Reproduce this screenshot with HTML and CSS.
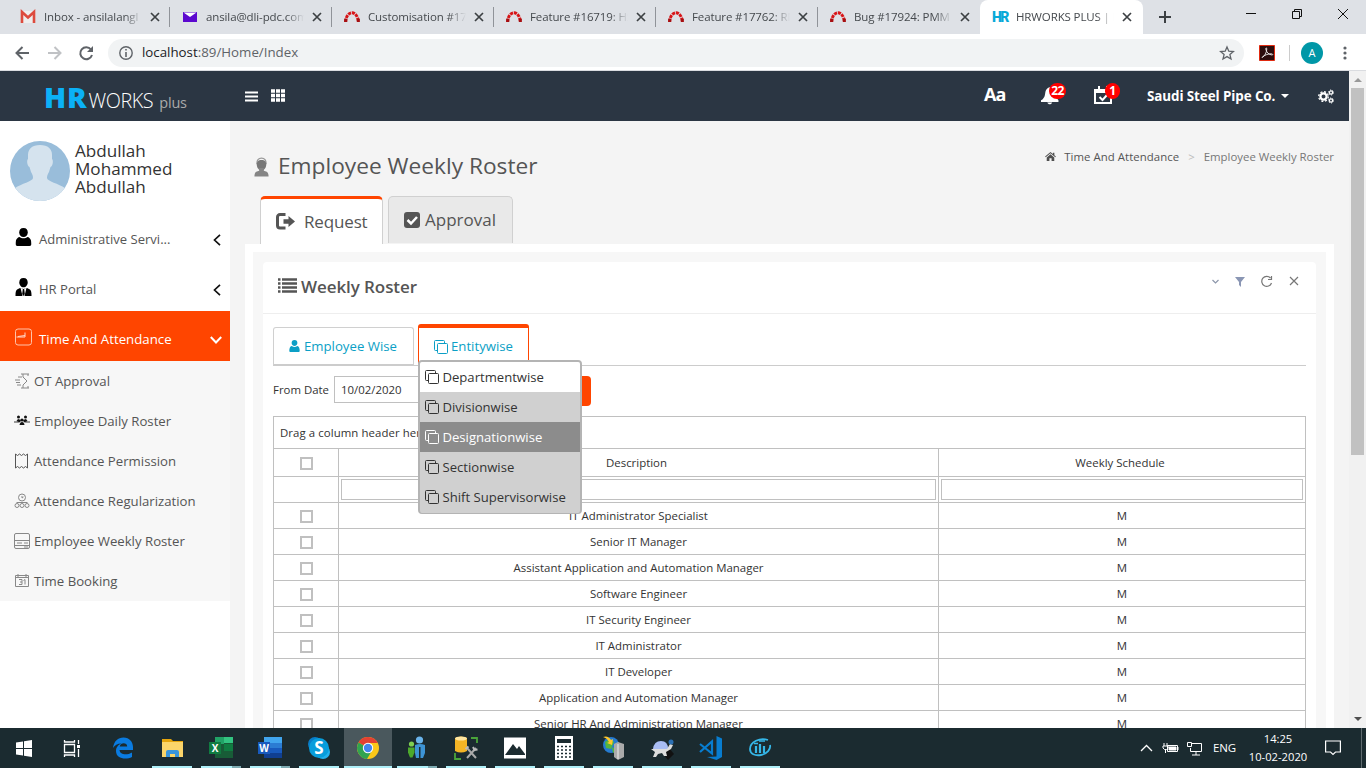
FILE: index.html
```html
<!DOCTYPE html>
<html lang="en">
<head>
<meta charset="utf-8">
<title>HRWORKS PLUS</title>
<link rel="stylesheet" href="styles.css">
</head>
<body>
<svg class="defs" width="0" height="0">
  <symbol id="x" viewBox="0 0 10 10"><path d="M1 1l8 8M9 1l-8 8" fill="none" stroke="currentColor" stroke-width="1.7"/></symbol>
  <symbol id="redmine" viewBox="0 0 16 12"><g fill="none" stroke-width="3"><path d="M1.6 11C2 5 5 1.8 8 1.8S14 5 14.4 11" stroke="#d81518" stroke-dasharray="3.2 .8"/><path d="M1.7 11v-3.3M14.3 11V7.7" stroke="#a50f12"/></g></symbol>
  <symbol id="clone" viewBox="0 0 14 14"><path d="M4 10.5H1.5a1 1 0 0 1-1-1v-8a1 1 0 0 1 1-1h8a1 1 0 0 1 1 1V3.500M4.500 3.500h8a1 1 0 0 1 1 1v8a1 1 0 0 1-1 1h-8a1 1 0 0 1-1-1v-8a1 1 0 0 1 1-1z" fill="none" stroke="currentColor"/></symbol>
  <symbol id="user" viewBox="0 0 16 18"><path d="M8 0c3 0 4.300 2 4.300 4.500S10.500 9 8 9 3.700 7 3.700 4.500 5 0 8 0z" fill="currentColor"/><path d="M4 9c2 1.800 6 1.800 8 0 3 .5 4 4 4 7 0 1.300-.8 2-2 2H2c-1.200 0-2-.7-2-2 0-3 1-6.500 4-7z" fill="currentColor"/></symbol>
</svg>
<div class="screen">
  <div class="tabstrip">
    <div class="tab"><svg class="fav" viewBox="0 0 16 14"><path d="M1 1h14v12H1z" fill="#eee"/><path d="M2 13V2l6 5.500L14 2v11" fill="none" stroke="#dd4b3e" stroke-width="2.600"/></svg><span class="tab-title">Inbox - ansilalangl</span><svg class="tab-x"><use href="#x"/></svg></div>
    <div class="tab"><svg class="fav" viewBox="0 0 16 14"><path d="M1 2h14v10H1z" fill="#5c08cf"/><path d="M1.500 2.500h13L8 7z" fill="#fff"/></svg><span class="tab-title">ansila@dli-pdc.com</span><svg class="tab-x"><use href="#x"/></svg></div>
    <div class="tab"><svg class="fav"><use href="#redmine"/></svg><span class="tab-title">Customisation #17</span><svg class="tab-x"><use href="#x"/></svg></div>
    <div class="tab"><svg class="fav"><use href="#redmine"/></svg><span class="tab-title">Feature #16719: HS</span><svg class="tab-x"><use href="#x"/></svg></div>
    <div class="tab"><svg class="fav"><use href="#redmine"/></svg><span class="tab-title">Feature #17762: RN</span><svg class="tab-x"><use href="#x"/></svg></div>
    <div class="tab last"><svg class="fav"><use href="#redmine"/></svg><span class="tab-title">Bug #17924: PMM</span><svg class="tab-x"><use href="#x"/></svg></div>
    <div class="tab active"><span class="hr-fav">HR</span><span class="tab-title">HRWORKS PLUS | E</span><svg class="tab-x"><use href="#x"/></svg></div>
    <svg class="plus" viewBox="0 0 12 12"><path d="M6 0v12M0 6h12" stroke="#3c4043" stroke-width="2"/></svg>
    <svg class="winctl" viewBox="0 0 104 14" fill="none" stroke="#111"><path d="M0 7.500h10M46.500 5.500h7v7h-7zM48.500 5.500v-2h7v7h-2M92 3l10 10M102 3L92 13"/></svg>
  </div>
  <div class="toolbar">
    <svg class="nav" viewBox="0 0 80 16" fill="none" stroke-width="2"><path d="M14 8H2M7.500 2L1.500 8l6 6" stroke="#5f6368"/><path d="M33 8h12M39.500 2l6 6-6 6" stroke="#c0c2c5"/><path d="M76 4.500A6 6 0 1 0 77 10" stroke="#5f6368"/><path d="M78 1v6h-6z" fill="#5f6368"/></svg>
    <div class="omni"><svg class="info" viewBox="0 0 14 14"><circle cx="7" cy="7" r="6.200" fill="none" stroke="#5f6368" stroke-width="1.400"/><path d="M7 3v1.600M7 6v5" stroke="#5f6368" stroke-width="1.600"/></svg><span class="url"><b>localhost</b>:89/Home/Index</span><svg class="star" viewBox="0 0 14 14"><path d="M7 1l1.800 4.200 4.600.4-3.500 3 1.100 4.400L7 10.600 3 13l1.100-4.400-3.500-3 4.600-.4z" fill="none" stroke="#5f6368" stroke-width="1.300"/></svg></div>
    <svg class="pdf" viewBox="0 0 16 16"><path d="M.5.500h15v15H.5z" fill="#2b0d0d" stroke="#e02a10"/><path d="M3 12.500c3-1.500 4.500-5 4.800-8.500.1-1.500-1.300-1.300-1 0C7.300 7 9.500 9.700 13 10c1.300 0 .6-1.400-.8-1.200-3 0-6 1-8.500 3z" fill="none" stroke="#eee" stroke-width=".9"/></svg>
    <span class="tb-sep"></span><span class="avatar-a">A</span>
    <svg class="dots" viewBox="0 0 4 14" fill="#5f6368"><circle cx="2" cy="2" r="1.600"/><circle cx="2" cy="7" r="1.600"/><circle cx="2" cy="12" r="1.600"/></svg>
  </div>
  <div class="viewport">
    <div class="page">
      <header class="topbar">
        <div class="brand"><strong>HR</strong><span>WORKS</span><small>plus</small></div>
        <svg class="burger" viewBox="0 0 13 11"><path d="M0 1.500h13M0 5.500h13M0 9.500h13" stroke="#fff" stroke-width="1.800"/></svg>
        <svg class="grid9" viewBox="0 0 14 13"><path d="M0 2h14M0 6.500h14M0 11h14" stroke="#fff" stroke-width="3.600" stroke-dasharray="4 1"/></svg>
        <span class="aa">Aa</span>
        <span class="notif bell"><svg viewBox="0 0 17 17"><path d="M0 13.500c3-2 3.500-3.500 4-7C4.500 3 7 1 9.500 1s5 2 5 5.500c0 3.500.5 5 2 7v1.500H0z" fill="#fff"/><path d="M6 15.500c.5 2.200 4 2.200 4.500 0z" fill="#fff"/></svg><i class="badge b22">22</i></span>
        <span class="notif cal"><svg viewBox="0 0 18 18"><path d="M1 4h16v13H1z" fill="none" stroke="#fff" stroke-width="2"/><path d="M1 3h16v4H1zM4 0h2v4H4zM12 0h2v4h-2z" fill="#fff"/><path d="M5.500 11l3 3 4.500-5" fill="none" stroke="#fff" stroke-width="2"/></svg><i class="badge b1">1</i></span>
        <span class="company">Saudi Steel Pipe Co.</span><i class="caret"></i>
        <svg class="gears" viewBox="0 0 16 15" fill="none" stroke="#fff"><circle cx="5.500" cy="7.500" r="3.100" stroke-width="2.200"/><circle cx="5.500" cy="7.500" r="4.800" stroke-width="1.300" stroke-dasharray="2 1.770"/><circle cx="13" cy="3.500" r="1.600" stroke-width="1.300"/><circle cx="13" cy="11.500" r="1.600" stroke-width="1.300"/><circle cx="13" cy="3.500" r="2.500" stroke-dasharray="1.200 1.410"/><circle cx="13" cy="11.500" r="2.500" stroke-dasharray="1.200 1.410"/></svg>
      </header>
      <div class="body">
        <aside class="side">
          <div class="profile">
            <svg class="photo" viewBox="0 0 60 60"><defs><clipPath id="c"><circle cx="30" cy="30" r="30"/></clipPath></defs><g clip-path="url(#c)"><path d="M0 0h60v60H0z" fill="#99bdda"/><path d="M30 4c8 0 12 4 12 10v4c1.500 1 1 7-1.500 8l-1.500 5c-1 2-2 3-2 6 0 3 12 6 18 10l5 4v9H0v-9l5-4c6-4 18-7 18-10 0-3-1-4-2-6l-1.500-5c-2.500-1-3-7-1.500-8v-4c0-6 4-10 12-10z" fill="#d5e3ee"/></g></svg>
            <div class="name">Abdullah<br>Mohammed<br>Abdullah</div>
          </div>
          <div class="item"><svg class="mi" viewBox="0 0 16 18"><use href="#user"/></svg><span class="t1">Administrative Servi...</span><svg class="chev" viewBox="0 0 8 12"><path d="M7 .8L1.500 6 7 11.200"/></svg></div>
          <div class="item"><svg class="mi" viewBox="0 0 16 18"><path d="M8 0c3 0 4.200 2 4.200 4.500S10.500 9.300 8 9.300 3.800 7 3.800 4.500 5 0 8 0z"/><path d="M4.500 10L2 11.200C.5 12 0 14 0 17v1h16v-1c0-3-.5-5-2-5.800L11.500 10 8 11z"/><path d="M5 9.800L7 18h2l2-8.200-3 1.400z" fill="#fff"/><path d="M7.300 11h1.400l.6 5L8 18l-1.300-2z"/></svg><span>HR Portal</span><svg class="chev" viewBox="0 0 8 12"><path d="M7 .8L1.500 6 7 11.200"/></svg></div>
          <div class="item on"><svg class="mi" viewBox="0 0 17 17"><rect x=".5" y=".5" width="16" height="16" rx="2.500" fill="none" stroke="#ffc3aa"/><path d="M1.500 8.500h8.500V4M3 8l7-1" fill="none" stroke="#ffd8c8"/></svg><span class="t3">Time And Attendance</span><svg class="chev down" viewBox="0 0 12 8"><path d="M.8 1L6 6.500 11.200 1"/></svg></div>
          <nav class="sub">
            <a><svg viewBox="0 0 16 16" fill="none" stroke="#888"><path d="M7 1h8M7 15h8M9 1v3l4 4-4 4v3M14 1v2M14 13v2M4 4h4M1 7h5M2 9.500h4M3 12h4"/></svg><span>OT Approval</span></a>
            <a><svg viewBox="0 0 16 16"><path d="M0 9h5M11 9h5" stroke="#999" stroke-width="2"/><g fill="#111"><circle cx="4.500" cy="4" r="1.500"/><circle cx="11.500" cy="4" r="1.500"/><path d="M2.500 8l1.500-2 3 1-1 2.500zM13.500 8L12 6 9 7l1 2.500z"/><circle cx="8" cy="7" r="1.600"/><path d="M5.500 12q.5-3 2.500-3t2.500 3z"/></g></svg><span class="t5">Employee Daily Roster</span></a>
            <a><svg viewBox="0 0 16 16" fill="none" stroke="#555"><path d="M1.500 14V1l2 1.500 2-1.500 2 1.500 2-1.500 2 1.500 2-1.500v14l-2-1.500-2 1.500-2-1.500-2 1.500-2-1.500-2 1.500z"/></svg><span>Attendance Permission</span></a>
            <a><svg viewBox="0 0 16 16" fill="none" stroke="#888"><circle cx="8" cy="4.500" r="3.500"/><path d="M8 3v2l1.500-1M2.500 9.500h11"/><circle cx="3" cy="12.500" r="2"/><circle cx="8" cy="12.500" r="2"/><circle cx="13" cy="12.500" r="2"/></svg><span>Attendance Regularization</span></a>
            <a><svg viewBox="0 0 16 16" fill="none" stroke="#888"><rect x=".5" y=".5" width="15" height="15" rx="1.500"/><path d="M1 7.500h14M1 12.500h14M3 10h5M10 10h4M10 14h4"/></svg><span>Employee Weekly Roster</span></a>
            <a><svg viewBox="0 0 16 16" fill="none" stroke="#888"><path d="M1.500 2.500h13v11h-13zM1.500 4.500h13M4 1v3M12 1v3M5 6.500h3v5H5M6 9h2M9.500 7.500l1.500-1v5"/></svg><span>Time Booking</span></a>
          </nav>
        </aside>
        <main>
          <div class="head">
            <svg class="worker" viewBox="0 0 16 22"><path d="M3 8C3 3 5 1.500 8 1.500S13 3 13 8" fill="none" stroke="#999" stroke-width="1.500"/><path d="M8 3.500c3.600 0 5 2 5 5s-1.800 6-5 6-5-3-5-6 1.400-5 5-5z" fill="#777"/><path d="M5.500 12h5v3c2 1 4.500.5 5 5V21H.5v-1C1 15.500 3.500 16 5.500 15z" fill="#858585"/></svg>
            <h1>Employee Weekly Roster</h1>
            <div class="crumbs"><svg viewBox="0 0 12 10" fill="#4f4f4f"><path d="M6 0L0 5l.7.800L6 1.500l5.300 4.300.7-.8-1.700-1.400V.800H8.700v1.300z"/><path d="M6 2.500L1.800 6v4h3V7h2.400v3h3V6z"/></svg><span class="c1">Time And Attendance</span><em>&gt;</em><span class="c2">Employee Weekly Roster</span></div>
          </div>
          <div class="maintabs">
            <div class="mt on"><svg viewBox="0 0 20 17"><path d="M9.500 1.500H4a2.500 2.500 0 0 0-2.500 2.500v8.500A2.500 2.500 0 0 0 4 15h5.500" fill="none" stroke="#555" stroke-width="3"/><path d="M7.500 6.200h5V3L19 8.500 12.500 14v-3.200h-5z" fill="#555"/></svg><span>Request</span></div>
            <div class="mt"><svg viewBox="0 0 16 16"><rect width="16" height="16" rx="3" fill="#555"/><path d="M3.500 8l3.500 3.500 6-6.500" fill="none" stroke="#fff" stroke-width="2.500"/></svg><span>Approval</span></div>
          </div>
          <div class="frame"><section class="panel">
            <div class="ptitle"><svg class="list" viewBox="0 0 19 15"><path d="M0 1.500h2.500M0 5.500h2.500M0 9.500h2.500M0 13.500h2.500M4 1.500h15M4 5.500h15M4 9.500h15M4 13.500h15" stroke="#555" stroke-width="2.500"/></svg><h2>Weekly Roster</h2>
              <svg class="tools" viewBox="0 0 90 14" fill="none"><path d="M2.500 6l3 3 3-3" stroke="#8d97ab" stroke-width="1.200"/><path d="M25 3h10l-4 5v5l-2-2V8z" fill="#8a96b4"/><path d="M60.500 4A5 5 0 1 0 61.500 9M61.500 2v3.500H58" stroke="#777" stroke-width="1.200"/><path d="M80 3l8 8M88 3l-8 8" stroke="#777" stroke-width="1.200"/></svg></div>
            <div class="pbody">
              <div class="subtabs">
                <div class="st"><svg width="11" height="12" viewBox="0 0 16 18"><use href="#user"/></svg><span>Employee Wise</span></div>
                <div class="st on"><svg width="14" height="14"><use href="#clone"/></svg><span>Entitywise</span>
                  <ul class="menu">
                    <li class="first"><svg><use href="#clone"/></svg><span>Departmentwise</span></li>
                    <li><svg><use href="#clone"/></svg><span>Divisionwise</span></li>
                    <li class="hover"><svg><use href="#clone"/></svg><span>Designationwise</span></li>
                    <li><svg><use href="#clone"/></svg><span>Sectionwise</span></li>
                    <li><svg><use href="#clone"/></svg><span>Shift Supervisorwise</span></li>
                  </ul></div>
              </div>
              <div class="filter"><label>From Date</label><div class="date">10/02/2020</div><button class="go"></button></div>
              <div class="group">Drag a column header here</div>
              <table>
                <colgroup><col class="k1"><col class="k2"><col class="k3"></colgroup>
                <tr class="th"><td><i class="cb"></i></td><td><span>Description</span></td><td><span>Weekly Schedule</span></td></tr>
                <tr class="tf"><td></td><td><div class="box"></div></td><td><div class="box"></div></td></tr>
                <tr><td><i class="cb"></i></td><td>IT Administrator Specialist</td><td>M</td></tr>
                <tr><td><i class="cb"></i></td><td>Senior IT Manager</td><td>M</td></tr>
                <tr><td><i class="cb"></i></td><td>Assistant Application and Automation Manager</td><td>M</td></tr>
                <tr><td><i class="cb"></i></td><td>Software Engineer</td><td>M</td></tr>
                <tr><td><i class="cb"></i></td><td>IT Security Engineer</td><td>M</td></tr>
                <tr><td><i class="cb"></i></td><td>IT Administrator</td><td>M</td></tr>
                <tr><td><i class="cb"></i></td><td>IT Developer</td><td>M</td></tr>
                <tr><td><i class="cb"></i></td><td>Application and Automation Manager</td><td>M</td></tr>
                <tr><td><i class="cb"></i></td><td>Senior HR And Administration Manager</td><td>M</td></tr>
              </table>
            </div>
          </section></div>
        </main>
      </div>
    </div>
    <div class="scroll"><i class="up"></i><div class="thumb"></div><i class="dn"></i></div>
  </div>
  <footer class="taskbar">
    <div class="app"><svg viewBox="0 0 24 24" fill="#fff"><path d="M4 6.500l7-1V12H4zM12 5.300l8-1.200V12h-8zM4 13h7v6.500l-7-1zM12 13h8v7.900l-8-1.200z"/></svg></div>
    <div class="app"><svg viewBox="0 0 24 24" fill="none" stroke="#fff" stroke-width="1.300"><path d="M3.500 8.500h10v8h-10zM3.500 4v2h10V4M3.500 21v-2h10v2M17.500 4v4M17.500 13v8"/><path d="M16 9h3v3h-3z" fill="#fff" stroke="none"/></svg></div>
    <div class="app"><svg viewBox="0 0 24 24"><path d="M2 12C3 5 7 1.500 12.500 1.500 18.500 1.500 22 6 22 11v3H8.500c.5 5 7.500 5.500 12.500 2.500V21c-6 3-16 2-16-6 0-4 2.500-6.500 5.500-7.500C6.500 7.500 3.500 9.500 2 12zM8.700 10.500h7.500c0-4-6.500-4.500-7.500 0z" fill="#0a7be0"/></svg></div>
    <div class="app run"><svg viewBox="0 0 24 24"><path d="M2 3h9l2 2h10v16H2z" fill="#e5a50d"/><path d="M2 6h21v15H2z" fill="#fbd56a"/><path d="M6 21v-5q0-2 2-2h9q2 0 2 2v5h-4v-3h-5v3z" fill="#3a96dd"/></svg></div>
    <div class="app run multi"><svg viewBox="0 0 24 24"><path d="M6 1h18v21H6z" fill="#185c37"/><path d="M6 1h9v7H6z" fill="#21a366"/><path d="M15 1h9v6h-9z" fill="#33c481"/><path d="M15 8h9v7h-9z" fill="#107c41"/><path d="M0 6h12v12H0z" fill="#107c41"/><text x="6" y="15.500" class="ol">X</text></svg></div>
    <div class="app run multi"><svg viewBox="0 0 24 24"><path d="M6 1h18v6H6z" fill="#41a5ee"/><path d="M6 7h18v5H6z" fill="#2b7cd3"/><path d="M6 12h18v5H6z" fill="#185abd"/><path d="M6 17h18v5H6z" fill="#103f91"/><path d="M0 6h12v12H0z" fill="#185abd"/><text x="6" y="15.500" class="ol">W</text></svg></div>
    <div class="app run"><svg viewBox="0 0 24 24"><circle cx="8" cy="8" r="7" fill="#087dc8"/><circle cx="16" cy="16" r="7" fill="#23b1ed"/><circle cx="12" cy="12" r="10" fill="#079ddb"/><text x="12" y="18" class="sk">S</text></svg></div>
    <div class="app run cur"><svg viewBox="0 0 24 24"><circle cx="12" cy="12" r="11" fill="#fbc718"/><path d="M12 12L2.500 6.500A11 11 0 0 1 21.800 7H12z" fill="#e34133"/><path d="M2.500 6.500A11 11 0 0 0 11 23l5-8.500-4-2.500z" fill="#31a350"/><circle cx="12" cy="12" r="5.200" fill="#fff"/><circle cx="12" cy="12" r="4.200" fill="#4385ef"/></svg></div>
    <div class="app run multi"><svg viewBox="0 0 24 24"><circle cx="6.500" cy="8" r="2.600" fill="#7fcf52"/><path d="M3 11.500h6.500v5l-2 5H5l-2-5z" fill="#4ca92c"/><circle cx="14.500" cy="4" r="3.600" fill="#6ab4ec"/><path d="M10 9q5-2 10 0v8l-2 5h-2.500V11h-1.500v11H11l-1-5z" fill="#3d94d5"/></svg></div>
    <div class="app run"><svg viewBox="0 0 24 24"><path d="M1 2q6-3 12 0v13q-6 3-12 0z" fill="#f4b525"/><ellipse cx="7" cy="2.500" rx="6" ry="2" fill="#ffe6a0"/><path d="M17 2h6v5M1 17v6h6" fill="none" stroke="#4aa53a" stroke-width="1.800"/><path d="M13 12l9 10M22 12l-9 10" stroke="#aaa" stroke-width="2"/><path d="M19 11l1.500 3 3-.5M11.500 13l3-2.500" stroke="#bbb" stroke-width="2" fill="none"/></svg></div>
    <div class="app run"><svg viewBox="0 0 24 24"><path d="M1 1.500h22v21H1z" fill="#fff"/><path d="M2 19l8-11 4 5 2-3 6 8v1z" fill="#1b2b30"/></svg></div>
    <div class="app run"><svg viewBox="0 0 24 24"><path d="M3 0h18v24H3z" fill="#fff"/><path d="M5 3h14v4H5z" fill="#1b2b30"/><path d="M5 10.500h14M5 14h14M5 17.500h14M5 21h14" stroke="#1b2b30" stroke-width="1.600" stroke-dasharray="2 2"/></svg></div>
    <div class="app run"><svg viewBox="0 0 24 24"><circle cx="10" cy="9" r="8" fill="#257bd1"/><path d="M4 6q5-5 9 0l-3 7-5-1zM11 11l5 3-4 3z" fill="#56b63c"/><path d="M2 1q5-2 8 3l2-1-1 6-5-2 2-1Q6 2 2 1z" fill="#ffc82c"/><path d="M13 8l4-2 6 2v13l-6 3-4-3z" fill="#aaa"/><path d="M17 8v15" stroke="#eee"/></svg></div>
    <div class="app run"><svg viewBox="0 0 24 24"><path d="M19 12l5 6-6 6-5-6z" fill="#111"/><path d="M3 13q1-8 8-8t7 8z" fill="#a9bdf4"/><path d="M1 13h16l3-5 3 1-2 4-5 3 1 4h-3l-2-3-4 1-2 3H3l2-5z" fill="#ddd"/><circle cx="21" cy="6" r="2.500" fill="#2b6fb3"/></svg></div>
    <div class="app run"><svg viewBox="0 0 24 24" fill="none" stroke="#087dd0"><path d="M17.500 0L23 2.500v18.500l-5.500 3L8 21l9.500-.5z" fill="#087dd0" stroke="none"/><path d="M1 8l12 9.500V5.500L1 16" stroke-width="2.200"/></svg></div>
    <div class="app run"><svg viewBox="0 0 24 24" fill="none" stroke="#35b7e8"><path d="M20 4C12 1 2 6 2 13c0 5 5 7 11 6s10-6 9-10" stroke-width="1.800"/><path d="M8 10v7M12 8v9M16 10v7" stroke-width="2.200"/><path d="M6 7.500h4M11 5h6" stroke-width="1.500"/></svg></div>
    <div class="tray">
      <svg viewBox="0 0 60 16" fill="none" stroke="#fff"><path d="M1 11l5.500-5.500L12 11" stroke-width="1.300"/><path d="M27.500 5.500h10v6h-10zM38 7v3"/><path d="M29 7h7v3h-7z" fill="#fff"/><path d="M24 3v3M27 3v3M23 6h5v2l-1.500 1.500h-2L23 8zM25.500 9v4" /><path d="M52 3.500h9.500v8H50.500V8M56 12v3M52 15h8M47.500 2.500h4v4h-4z"/></svg>
      <span class="lang">ENG</span><div class="clock">14:25<br>10-02-2020</div>
      <svg class="note" viewBox="0 0 16 16" fill="none" stroke="#fff" stroke-width="1.200"><path d="M.6 1h14.800v11H10.500L8 14.500 5.500 12H.6z"/></svg><i class="desk"></i>
    </div>
  </footer>
</div>
</body>
</html>
```
FILE: styles.css
```css
* { box-sizing: border-box; }
body { margin: 0; font: 13px/1.2 "Open Sans", "Noto Sans", sans-serif; color: #333; }
svg { flex: none; display: block; overflow: visible; }
h1, h2, ul { margin: 0; padding: 0; font-weight: 400; }
.defs { position: absolute; }
.screen { width: 1366px; height: 768px; overflow: hidden; display: flex; flex-direction: column; }

/* browser window */
.tabstrip { height: 34px; flex: none; background: #dee1e6; display: flex; align-items: center; padding-left: 8px; }
.tab { width: 162px; height: 34px; display: flex; align-items: center; padding: 0 0 0 12px; background: linear-gradient(#909399, #909399) right center / 1px 20px no-repeat; }
.tab.last { background: none; }
.tab.active { background: #fff; border-radius: 8px 8px 0 0; width: 163px; }
.fav { width: 16px; height: 14px; margin-right: 8px; }
.tab-title { width: 98px; overflow: hidden; white-space: nowrap; font-size: 11.5px; letter-spacing: -.12px; color: #45494d; -webkit-mask-image: linear-gradient(90deg, #000 82%, transparent); mask-image: linear-gradient(90deg, #000 82%, transparent); }
.tab-x { width: 10px; height: 10px; margin-left: 8px; color: #3c4043; }
.hr-fav { width: 24px; font: 900 14px/14px "Roboto", sans-serif; letter-spacing: -1.5px; color: #08a9d8; }
.plus { width: 12px; height: 12px; margin-left: 16px; }
.winctl { width: 104px; height: 14px; margin: -8px 0 0 75px; }
.toolbar { height: 37px; flex: none; background: #fff; border-bottom: 1px solid #dadce0; display: flex; align-items: center; padding: 1px 0 0 15px; }
.nav { width: 80px; height: 16px; }
.omni { width: 1136px; height: 28px; margin-left: 13px; border-radius: 14px; background: #f1f3f4; display: flex; align-items: center; padding: 0 11px; }
.info { width: 14px; height: 14px; }
.url { font-size: 13.3px; margin-left: 9px; flex: 1; color: #5f6368; }
.url b { font-weight: 400; color: #202124; }
.star { width: 14px; height: 14px; margin-right: -1px; }
.pdf { width: 16px; height: 16px; margin-left: 15px; }
.tb-sep { width: 1px; height: 16px; background: #ccc; margin-left: 14px; }
.avatar-a { width: 22px; height: 22px; margin-left: 11px; border-radius: 50%; background: #0097a7; color: #fff; font-size: 11px; line-height: 22px; text-align: center; }
.dots { width: 4px; height: 14px; margin-left: 20px; }
.viewport { flex: 1; min-height: 0; display: flex; overflow: hidden; }
.page { width: 1349px; background: #f4f4f4; overflow: hidden; }
.scroll { width: 17px; background: #f1f1f1; display: flex; flex-direction: column; align-items: center; padding: 7px 0 5px; }
.scroll .up, .scroll .dn { border: 4px solid transparent; border-top: 0; border-bottom: 4px solid #999; margin-bottom: 6px; }
.thumb { width: 13px; height: 367px; background: #c1c1c1; }
.scroll .dn { border-bottom: 0; border-top: 4px solid #505050; margin: auto 0 2px; }

/* application bar */
.topbar { height: 50px; background: #2b3643; display: flex; align-items: center; color: #fff; }
.brand { width: 199px; padding-left: 44px; height: 50px; display: flex; align-items: baseline; line-height: 52px; white-space: nowrap; }
.brand strong { font-size: 29px; font-weight: 800; color: #0bb1f7; letter-spacing: .8px; }
.brand span { font-size: 19.800px; font-weight: 300; letter-spacing: -.4px; margin-left: 1px; }
.brand small { font-size: 14.500px; color: #aaa; margin-left: 6px; letter-spacing: -.2px; }
.burger { width: 13px; height: 11px; margin-left: 46px; }
.grid9 { width: 14px; height: 13px; margin: -1px 0 0 13px; }
.aa { font-size: 18px; font-weight: 700; margin: -2px 0 0 699px; width: 57px; letter-spacing: -1px; }
.notif { position: relative; width: 53px; margin-top: -2px; }
.notif svg { width: 18px; height: 18px; }
.badge { position: absolute; top: -3px; height: 16px; border-radius: 8px; background: #f00; color: #fff; font: 700 12px/16px "Open Sans", sans-serif; text-align: center; letter-spacing: -.6px; }
.b22 { left: 8px; width: 17px; }
.b1 { left: 11px; width: 15px; }
.company { width: 132px; font-size: 13.400px; font-weight: 700; letter-spacing: -.08px; margin-left: 0; white-space: nowrap; }
.caret { border: 4.5px solid transparent; border-top-color: #fff; border-bottom: 0; margin-left: 2px; }
.gears { width: 16px; height: 15px; margin-left: 29px; }
.body { display: flex; height: 607px; }

/* side menu */
.side { width: 230px; background: #fff; color: #555; }
.profile { height: 90px; padding: 20px 0 0 10px; display: flex; gap: 5px; }
.photo { width: 60px; height: 60px; }
.name { font-size: 17.1px; line-height: 18px; color: #333; padding-top: 1px; }
.item { height: 50px; display: flex; align-items: center; padding: 0 9px 0 15px; font-size: 13.050px; }
.item span { margin: 8px 0 0 7px; flex: 1; white-space: nowrap; }
.mi { width: 17px; height: 18px; color: #000; margin-top: 1px; }
.chev { width: 8px; height: 12px; margin-top: 7px; fill: none; stroke: #111; stroke-width: 1.7; }
.item.on { background: #ff4500; color: #fff; font-size: 13.250px; }
.chev.down { width: 12px; height: 8px; stroke: #fff; margin-right: -1px; stroke-width: 2; }
.sub { background: #f7f7f7; height: 240px; }
.sub a { height: 40px; display: flex; align-items: center; gap: 4px; padding-left: 14px; font-size: 13.200px; white-space: nowrap; }
.sub span { margin-top: 2px; }
.sub svg { width: 16px; height: 16px; }

/* content */
main { width: 1119px; padding: 0 15px; }
.head { height: 75px; display: flex; align-items: center; padding: 14px 0 0 9px; }
.worker { width: 15px; height: 22px; margin-top: 3px; }
h1 { font-size: 22.700px; margin-left: 9px; color: #555; flex: 1; }
.crumbs { display: flex; align-items: center; font-size: 11.400px; margin-top: -18px; color: #555; }
.crumbs svg { width: 11px; height: 9px; margin-right: 8px; }
.crumbs em { font-style: normal; color: #bbb; margin: 0 9px; }
.c1 { letter-spacing: .05px; }
.c2 { color: #777; }
.maintabs { height: 48px; display: flex; gap: 5px; padding-left: 15px; }
.mt { width: 125px; height: 47px; border: 1px solid #d0d0d0; border-bottom: 0; border-radius: 5px 5px 0 0; background: #e9e9e9; font-size: 17px; color: #555; display: flex; align-items: center; padding-left: 15px; gap: 5px; }
.mt svg { width: 16px; height: 16px; }
.mt.on { width: 123px; height: 48px; background: #fff; border-top: 3px solid #ff4500; gap: 8px; }
.mt.on svg { width: 20px; height: 17px; }
.mt.on span { margin-top: 2px; letter-spacing: -.15px; }
.frame { border: 8px solid #fff; border-bottom: 0; background: #f7f7f7; padding: 10px 10px 0; }
.panel { background: #fff; border-radius: 4px; height: 600px; }
.ptitle { height: 52px; border-bottom: 1px solid #eee; padding: 0 16px 0 15px; display: flex; align-items: center; }
.list { width: 19px; height: 15px; margin-top: -4px; }
h2 { font-size: 17px; font-weight: 600; color: #555; margin: 0 auto 0 4px; letter-spacing: -.08px; }
.tools { width: 90px; height: 14px; margin-top: -13px; }
.pbody { padding: 10px 10px 0; }
.subtabs { height: 42px; border-bottom: 1px solid #ccc; display: flex; align-items: flex-end; gap: 4px; font-size: 13.200px; }
.st { width: 141px; height: 39px; border: 1px solid #d0d0d0; border-bottom: 2px solid #ccc; border-radius: 3px 3px 0 0; color: #0b9fc6; display: flex; align-items: center; padding-left: 15px; gap: 4px; margin-bottom: -1px; }
.st > span { margin-top: 1px; }
.st.on { position: relative; width: 111px; height: 42px; border: 1px solid #ff4500; border-top-width: 4px; border-bottom: 0; background: #fff; gap: 3px; }
.st.on > span { margin-top: 0; }
.menu { position: absolute; left: -1px; top: 32px; width: 164px; height: 154px; z-index: 2; background: #d0d0d0; border: 1px solid #b4b4b4; border-width: 2px 2px 1px; border-radius: 4px; overflow: hidden; color: #333; list-style: none; }
.menu li { height: 30px; display: flex; align-items: center; gap: 3.500px; padding-left: 5px; white-space: nowrap; font-size: 13.100px; }
.menu span { margin-top: 1px; }
.menu svg { width: 14px; height: 14px; }
.menu .first { background: #fff; }
.menu .hover { background: #8c8c8c; color: #fff; }
.filter { height: 50px; padding-top: 10px; display: flex; font-size: 11.400px; }
.filter label { width: 61px; line-height: 28px; white-space: nowrap; }
.date { width: 160px; height: 27px; border: 1px solid #c0c0c0; line-height: 26px; padding-left: 6px; }
.go { margin-left: 24px; width: 73px; height: 30px; border: 0; border-radius: 4px; background: #ff4500; }
.group { height: 33px; border: 1px solid #c0c0c0; padding-left: 6px; line-height: 32px; font-size: 11.400px; letter-spacing: .08px; }
table { width: 1033px; border-collapse: collapse; table-layout: fixed; font-size: 11.430px; margin-top: -1px; }
.k1 { width: 65px; } .k2 { width: 600px; } .k3 { width: 367px; }
td { height: 26px; padding: 0; border: 1px solid #c0c0c0; text-align: center; line-height: 16px; }
.th td { height: 28px; }
.th span { margin-right: 4px; }
.tf td { padding: 2px; }
.box { height: 21px; border: 1px solid #c0c0c0; }
.cb { display: block; width: 13px; height: 13px; border: 2px solid #c0c0c0; margin: 2px auto 0; }

/* desktop taskbar */
.taskbar { height: 40px; flex: none; background: #1b2b30; display: flex; color: #fff; }
.app { width: 48px; margin-right: 1px; display: flex; align-items: center; justify-content: center; }
.app:nth-child(n+3) { position: relative; left: 1px; }
.app svg { width: 24px; height: 24px; }
.app.run { background: linear-gradient(#aeeff8, #aeeff8) center bottom / 40px 2px no-repeat; }
.app.multi { background: linear-gradient(90deg, #aeeff8 31px, #7eabb2 31px) center bottom / 40px 2px no-repeat; }
.app.cur { background: linear-gradient(#4a585d, #4a585d) top / 48px 38px no-repeat, #aeeff8; }
.ol { font: 700 10px "Open Sans", sans-serif; fill: #fff; text-anchor: middle; }
.sk { font: 700 17px "Open Sans", sans-serif; fill: #fff; text-anchor: middle; }
.tray { margin-left: auto; width: 226px; display: flex; align-items: center; }
.tray svg { width: 60px; height: 16px; }
.lang { font-size: 11.500px; margin-left: 13px; width: 27px; letter-spacing: -.1px; }
.clock { width: 76px; text-align: center; font-size: 11.200px; line-height: 18px; }
.tray .note { width: 16px; height: 16px; margin-left: 9px; }
.desk { width: 1px; height: 40px; background: #5f6b6f; margin-left: 20px; }
```
